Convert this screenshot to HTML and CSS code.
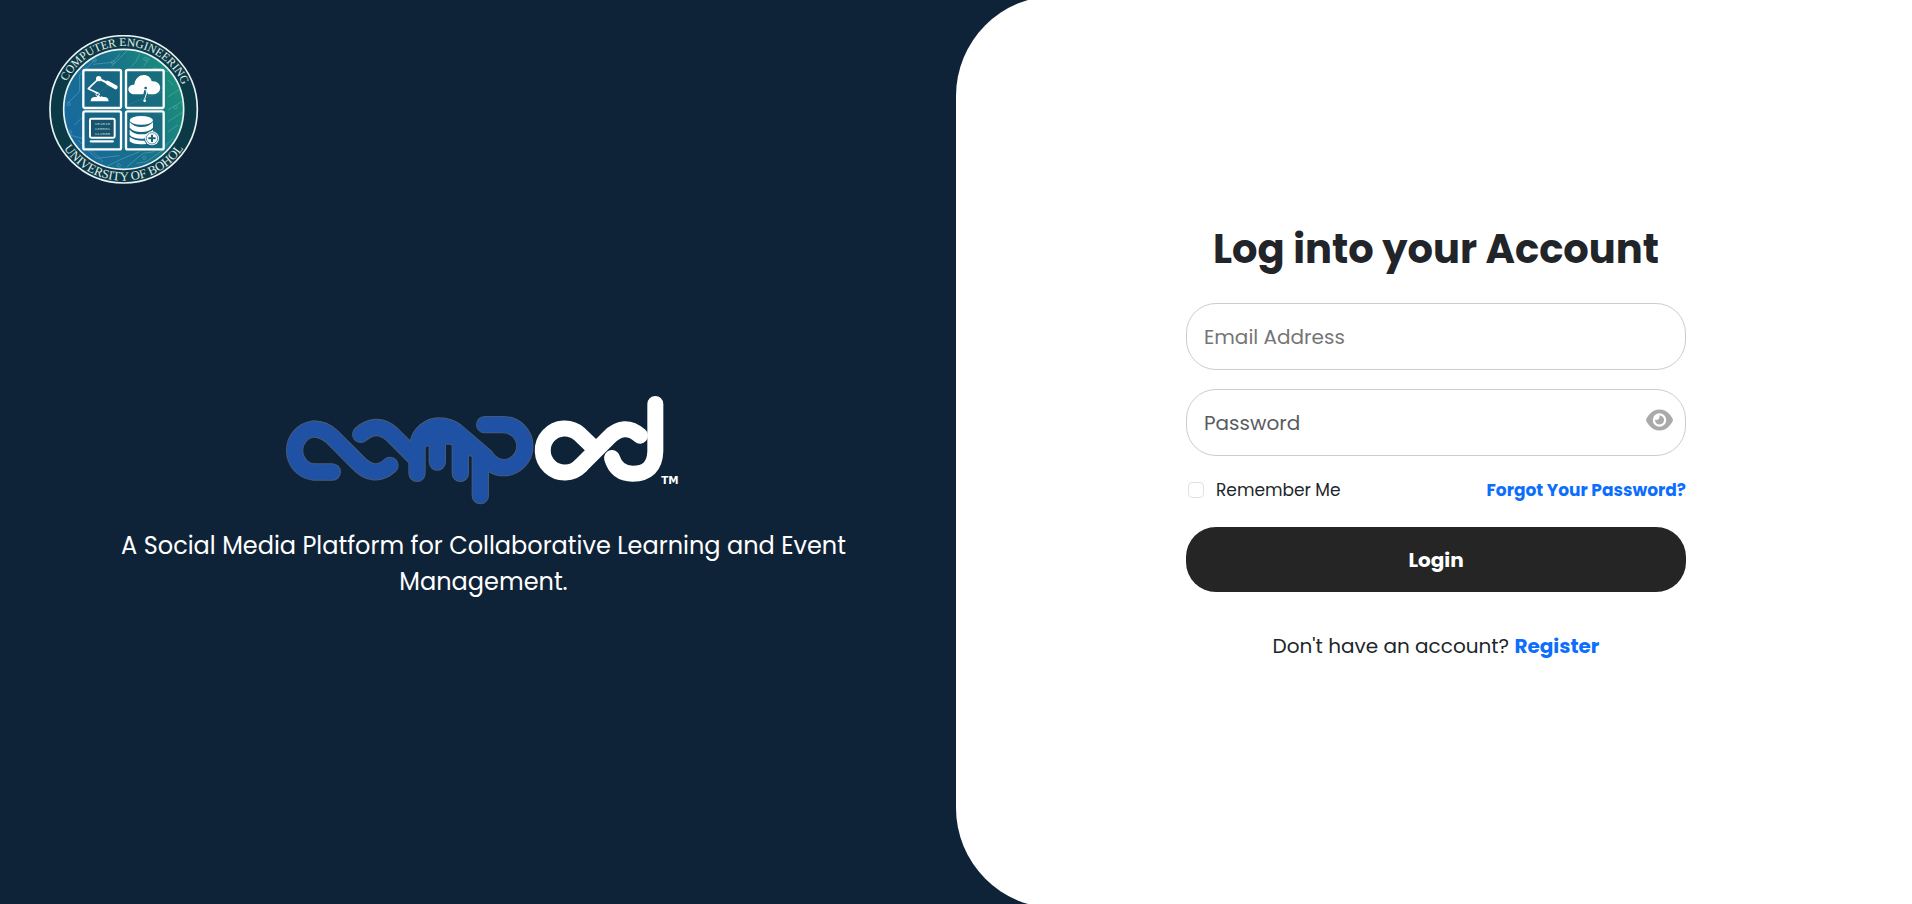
FILE: index.html
```html
<!DOCTYPE html>
<html lang="en">
<head>
<meta charset="utf-8">
<meta name="viewport" content="width=device-width, initial-scale=1">
<title>Compod | Login</title>
<link rel="stylesheet" href="styles.css">
</head>
<body>
<div class="page">
  <section class="intro">
    <svg class="seal" viewBox="28 30 450 450" role="img" aria-label="Computer Engineering, University of Bohol">
      <defs>
        <linearGradient id="sea" x1="0" y1="0.7" x2="1" y2="0.3">
          <stop offset="0" stop-color="#176a9f"/>
          <stop offset="0.5" stop-color="#176f8c"/>
          <stop offset="1" stop-color="#1b9078"/>
        </linearGradient>
        <path id="arc-top" d="M62 253A190 190 0 0 1 442 253"/>
        <path id="arc-bottom" d="M38 253A214 214 0 0 0 466 253"/>
      </defs>
      <circle class="seal-ring" cx="252" cy="253" r="221"/>
      <circle cx="252" cy="253" r="180" fill="url(#sea)" stroke="#e9f3f3" stroke-width="5"/>
      <g class="seal-trace">
        <path d="M84 235L120 199V150L165 105M105 300L130 275M90 330L128 340M115 345L170 400L240 392M150 370L190 410M160 118L220 112L240 88M215 125L262 78M275 125L290 108L300 88M312 125L330 98M340 128L385 140M385 165L400 180M385 215L425 190M385 255L430 228M385 290L428 262M385 320L415 300M375 365L400 340M345 380L310 385L262 425M300 380L250 400L200 425M370 375L320 410L290 415M148 235L200 185L240 180M265 240L300 225L370 200M150 365L230 290M270 280L340 262L370 270"/>
        <circle cx="87" cy="237" r="5"/><circle cx="220" cy="112" r="5"/><circle cx="317" cy="102" r="5"/><circle cx="237" cy="421" r="5"/><circle cx="314" cy="398" r="5"/><circle cx="407" cy="247" r="5"/><circle cx="91" cy="322" r="5"/><circle cx="165" cy="105" r="5"/>
      </g>
      <g class="seal-tile">
        <rect x="131" y="135" width="113" height="114" rx="5"/>
        <rect x="259" y="135" width="113" height="114" rx="5"/>
        <rect x="131" y="259" width="113" height="114" rx="5"/>
        <rect x="259" y="259" width="113" height="114" rx="5"/>
      </g>
      <g class="seal-line">
        <path d="M173 204L146 191L176 162" stroke-width="5"/>
        <path d="M175 160L204 174" stroke-width="6"/>
        <path d="M204 173L228 187" stroke-width="12"/>
        <circle cx="174" cy="208" r="5" stroke-width="3"/>
        <rect class="seal-screen" x="151" y="281" width="74" height="57" rx="4" stroke-width="6"/>
        <path d="M154 349H219" stroke-width="7"/>
      </g>
      <g class="seal-solid">
        <path d="M153 229Q153 216 166 216H171Q176 209 182 216Q186 212 190 216Q206 214 207 229Z"/>
        <circle cx="177" cy="161" r="8"/>
        <path d="M286 208C260 207 260 178 284 179C288 144 330 141 336 169C368 166 370 206 342 208H325L320 195H314L311 208Z"/>
        <ellipse cx="305" cy="286" rx="35" ry="13"/>
        <path d="M270 291Q282 306 305 306T340 291V308Q328 321 305 321T270 308Z"/>
        <path d="M270 314Q282 328 305 328T340 314V323Q318 325 314 341Q282 343 270 330Z"/>
        <path d="M270 336Q284 348 314 347L320 357Q282 361 270 349Z"/>
        <circle cx="337" cy="340" r="21"/>
      </g>
      <path d="M318 190L321 204L315 222" fill="none" stroke="#fff" stroke-width="3"/>
      <circle cx="315" cy="227" r="4" fill="#fff"/>
      <circle cx="318" cy="189" r="4" fill="#17637c"/>
      <path d="M337 329V351M326 340H348" stroke="#17637c" stroke-width="6"/>
      <circle cx="337" cy="340" r="17" fill="none" stroke="#17637c" stroke-width="2"/>
      <g class="seal-code">
        <text x="188" y="299">101010</text>
        <text x="188" y="315">130001</text>
        <text x="188" y="331">111000</text>
      </g>
      <text class="seal-text seal-text-top"><textPath href="#arc-top" startOffset="51%">COMPUTER ENGINEERING</textPath></text>
      <text class="seal-text seal-text-bottom"><textPath href="#arc-bottom" startOffset="50%">UNIVERSITY OF BOHOL</textPath></text>
    </svg>

    <div class="brand">
      <svg class="wordmark" viewBox="45 48 1191 324" role="img" aria-label="Compod">
        <defs>
          <g id="comp">
            <path d="M187 276H130A64 65 0 0 1 130 147Q162 147 187 171L262 246Q312 300 360 256"/>
            <path d="M272 163Q320 122 366 163L440 237"/>
            <path d="M441 200V280M502 170V246M571 180V280M631 230V347"/>
            <path d="M444 190A66 66 0 0 1 507 138Q538 138 560 156L646 230Q668 263 700 263A64 64 0 0 0 700 134H644"/>
            <path d="M452 180L480 168H550L606 204"/>
          </g>
        </defs>
        <use class="comp-edge" href="#comp"/>
        <use class="comp-body" href="#comp"/>
        <g class="pod">
          <path d="M932 257A66 66 0 1 1 928 162L972 204"/>
          <path d="M932 257L1016 173Q1062 126 1110 167"/>
          <path d="M1156 72L1156 214Q1154 281 1088 281Q1040 281 1026 234"/>
        </g>
        <text class="mark" x="1174" y="312">TM</text>
      </svg>
      <p class="tagline">A Social Media Platform for Collaborative Learning and Event Management.</p>
    </div>
  </section>

  <main class="panel">
    <form class="login">
      <h1 class="title">Log into your Account</h1>
      <input class="field" type="email" placeholder="Email Address" aria-label="Email Address">
      <div class="password">
        <input class="field field-password" type="password" placeholder="Password" aria-label="Password">
        <button class="reveal" type="button" aria-label="Show password">
          <svg class="eye" viewBox="0 0 576 512"><path d="M288 32c-80.8 0-145.5 36.8-192.6 80.6C48.6 156 17.3 208 2.5 243.7c-3.3 7.9-3.3 16.7 0 24.6C17.3 304 48.6 356 95.4 399.4C142.5 443.2 207.2 480 288 480s145.5-36.8 192.6-80.6c46.8-43.5 78.1-95.4 93-131.1c3.3-7.9 3.3-16.7 0-24.6c-14.9-35.7-46.2-87.7-93-131.1C433.5 68.8 368.8 32 288 32zM144 256a144 144 0 1 1 288 0 144 144 0 1 1 -288 0zm144-64c0 35.3-28.7 64-64 64c-7.1 0-13.9-1.2-20.3-3.3c-5.5-1.8-11.9 1.6-11.7 7.4c.3 6.9 1.3 13.8 3.2 20.7c13.7 51.2 66.4 81.6 117.6 67.9s81.6-66.4 67.9-117.6c-11.1-41.5-47.8-69.4-88.6-71.1c-5.8-.2-9.2 6.1-7.4 11.7c2.1 6.4 3.3 13.2 3.3 20.3z"/></svg>
        </button>
      </div>
      <div class="options">
        <label class="remember" for="remember"><input class="tick" type="checkbox" id="remember">Remember Me</label>
        <a class="link" href="#forgot">Forgot Your Password?</a>
      </div>
      <button class="submit" type="submit">Login</button>
      <p class="signup">Don't have an account? <a class="link" href="#register">Register</a></p>
    </form>
  </main>
</div>
</body>
</html>
```

FILE: styles.css
```css
* {
  box-sizing: border-box;
}

body {
  margin: 0;
  background: #0f2338;
  color: #212529;
  font-family: Poppins, Inter, sans-serif;
}

.page {
  display: grid;
  grid-template-columns: 1fr 1fr;
  min-height: 100vh;
  overflow: hidden;
}

.intro {
  display: flex;
  flex-direction: column;
  padding: 35px 38px 0 49px;
}

.seal {
  width: 150px;
  height: 150px;
}

.seal-ring {
  fill: #0b3a46;
  stroke: #e9f3f3;
  stroke-width: 5;
}

.seal-trace {
  fill: none;
  stroke: #7fbcc8;
  stroke-width: 2;
  opacity: 0.6;
}

.seal-tile {
  fill: #15607c;
  fill-opacity: 0.6;
  stroke: #fff;
  stroke-width: 7;
}

.seal-line {
  fill: none;
  stroke: #fff;
  stroke-linecap: round;
  stroke-linejoin: round;
}

.seal-screen {
  fill: #17546b;
}

.seal-solid {
  fill: #fff;
}

.seal-code {
  fill: #b8d6de;
  font: 13px "Liberation Mono", monospace;
  text-anchor: middle;
}

.seal-text {
  fill: #e4eded;
  text-anchor: middle;
}

.seal-text-top {
  font: 35px "Liberation Serif", serif;
}

.seal-text-bottom {
  font: 38px "Liberation Serif", serif;
}

.brand {
  flex: 1;
  display: flex;
  flex-direction: column;
  align-items: center;
  justify-content: center;
  gap: 24px;
  padding-bottom: 93px;
}

.wordmark {
  width: 397px;
  max-width: 100%;
  overflow: visible;
}

.comp-edge,
.comp-body,
.pod {
  fill: none;
  stroke-linecap: round;
  stroke-linejoin: round;
}

.comp-edge {
  stroke: #4c5c78;
  stroke-width: 52;
}

.comp-body {
  stroke: #1f52a5;
  stroke-width: 47;
}

.pod {
  stroke: #fff;
  stroke-width: 48;
}

.mark {
  fill: #fff;
  font: bold 31px "DejaVu Sans", sans-serif;
}

.tagline {
  max-width: 770px;
  margin: 0;
  color: #fff;
  font-size: 24px;
  line-height: 36px;
  text-align: center;
}

.panel {
  display: flex;
  align-items: center;
  justify-content: center;
  margin: -4px -4px -4px 0;
  padding: 24px 24px 45px;
  border-radius: 100px 0 0 100px;
  background: #fff;
}

.login {
  display: flex;
  flex-direction: column;
  width: 100%;
  max-width: 500px;
}

.title {
  margin: 0 0 30px;
  font-size: 40px;
  font-weight: 700;
  line-height: 48px;
  text-align: center;
}

.field {
  width: 100%;
  height: 67px;
  padding: 0 17px;
  border: 1px solid #ccc;
  border-radius: 30px;
  background: #fff;
  color: #212529;
  font: inherit;
  font-size: 20px;
}

.field::placeholder {
  color: #757575;
  opacity: 1;
}

.field-password::placeholder {
  color: #595c5f;
}

.password {
  position: relative;
  display: flex;
  margin-top: 19px;
}

.reveal {
  position: absolute;
  top: 19px;
  right: 13px;
  display: flex;
  padding: 0;
  border: 0;
  background: none;
  cursor: pointer;
}

.eye {
  width: 27px;
  height: 24px;
  fill: #aaa;
}

.options {
  display: flex;
  align-items: center;
  justify-content: space-between;
  margin: 22px 0 25px;
  font-size: 17px;
  line-height: 24px;
}

.remember {
  display: flex;
  align-items: center;
  gap: 12px;
}

.tick {
  appearance: none;
  width: 16px;
  height: 16px;
  margin: 0 0 0 2px;
  border: 1px solid #dee2e6;
  border-radius: 4px;
  background: #fff;
}

.tick:checked {
  background: #0d6efd;
}

.link {
  color: #0d6efd;
  font-weight: 700;
  text-decoration: none;
}

.submit {
  height: 65px;
  border: 0;
  border-radius: 30px;
  background: #252525;
  color: #fff;
  font: inherit;
  font-size: 20px;
  font-weight: 700;
  cursor: pointer;
}

.signup {
  margin: 42px 0 0;
  font-size: 20px;
  line-height: 24px;
  text-align: center;
}
```
